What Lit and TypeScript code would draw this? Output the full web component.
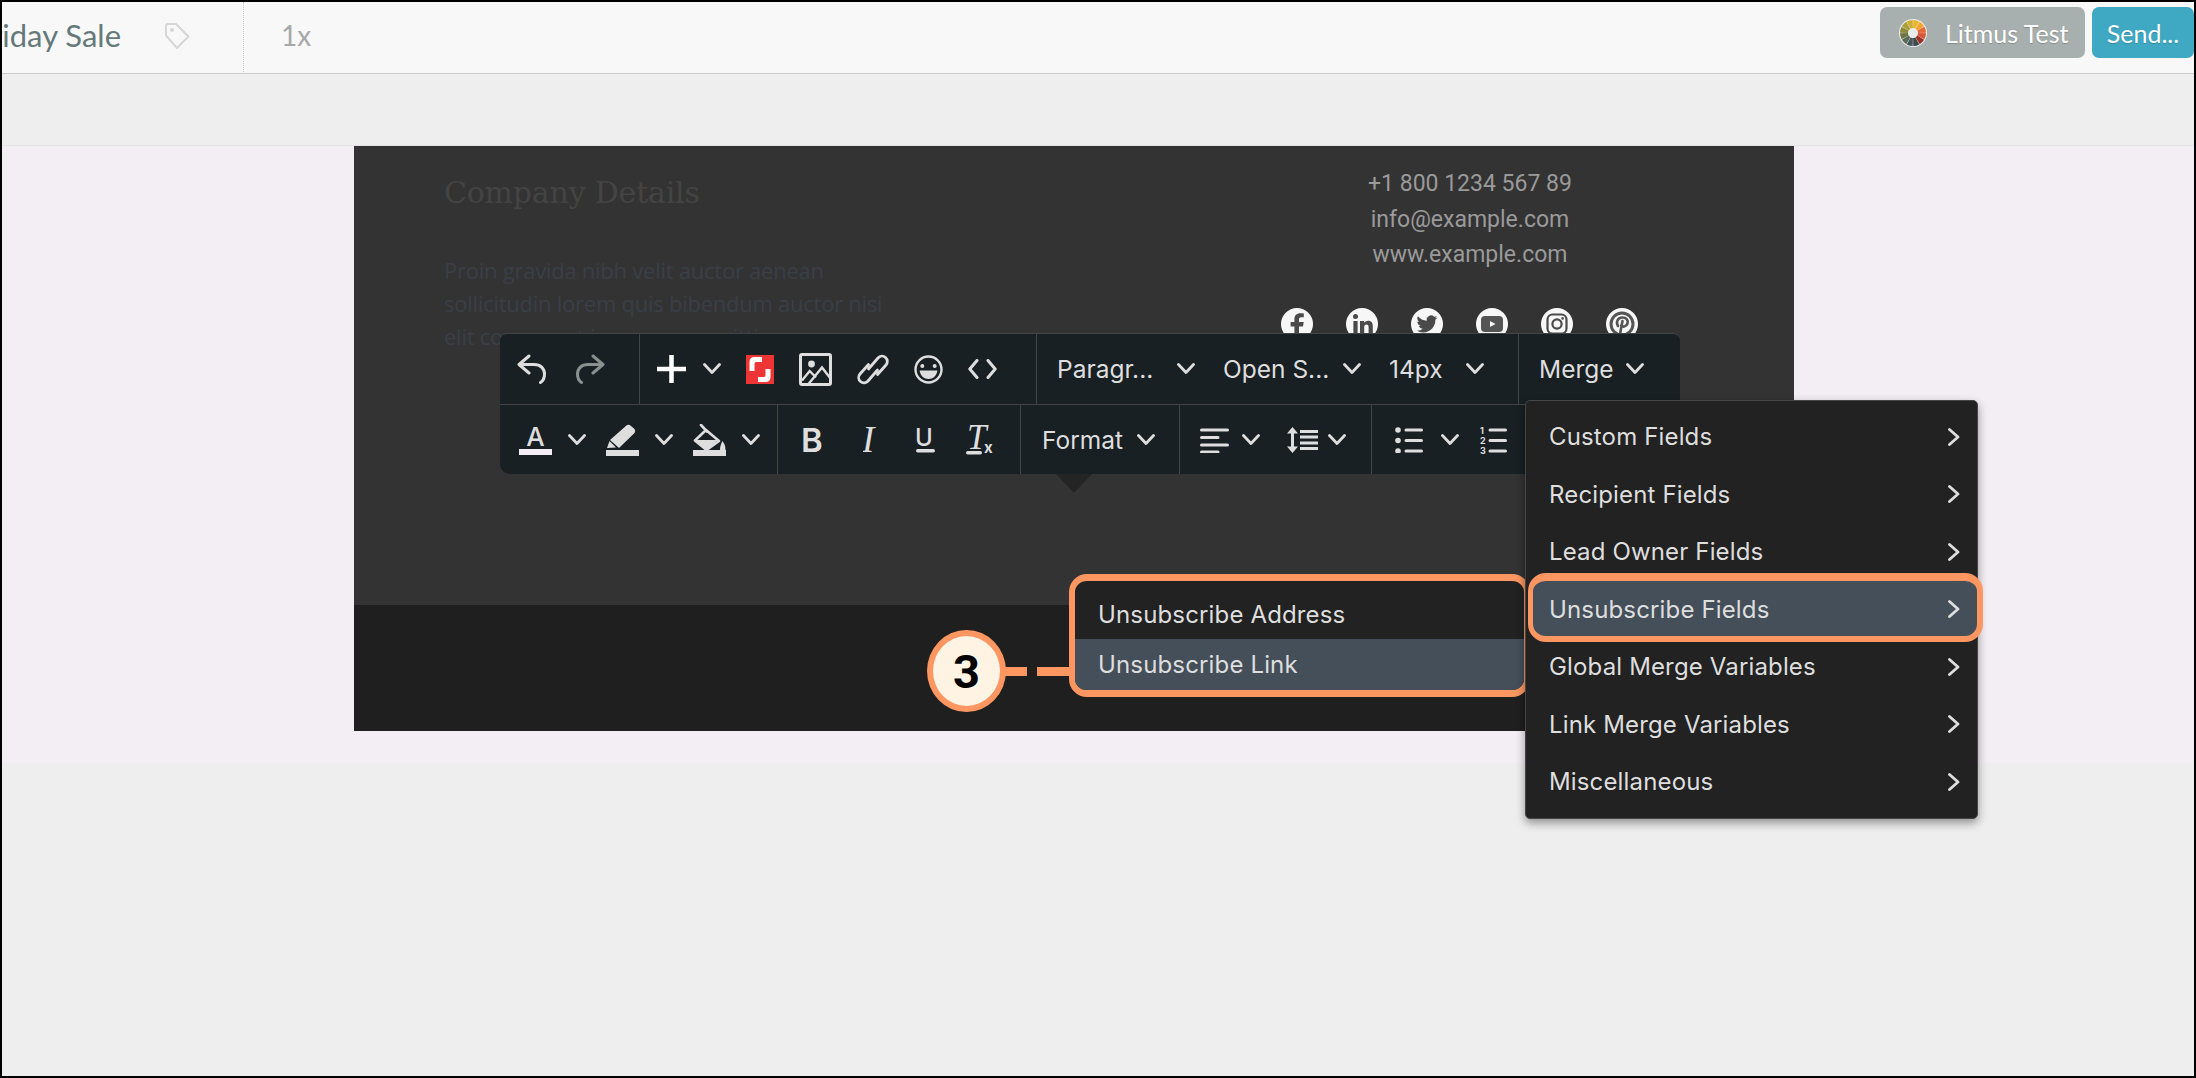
import { LitElement, html, css, svg } from "lit";
import { customElement } from "lit/decorators.js";

const MENU_ITEMS = [
  "Custom Fields",
  "Recipient Fields",
  "Lead Owner Fields",
  "Unsubscribe Fields",
  "Global Merge Variables",
  "Link Merge Variables",
  "Miscellaneous",
];

const WHEEL = [
  "#eab72f", "#f4a62e", "#e8683a", "#d9553a", "#9a3024", "#3d4853",
  "#46555a", "#5a6b58", "#6f7444", "#8f8a3a", "#ad9f38", "#cdae33",
];

// 12 slice colour wheel of the Litmus button
const wheel = () => {
  const slices = WHEEL.map((color, i) => {
    const a0 = ((i - 3) * Math.PI) / 6 + 0.02;
    const a1 = ((i - 2) * Math.PI) / 6 - 0.02;
    const p = (r: number, a: number) => `${(14 + r * Math.cos(a)).toFixed(2)} ${(14 + r * Math.sin(a)).toFixed(2)}`;
    return svg`<path d="M${p(5, a0)} L${p(13, a0)} A13 13 0 0 1 ${p(13, a1)} L${p(5, a1)} A5 5 0 0 0 ${p(5, a0)}Z" fill=${color}></path>`;
  });
  return html`<svg width="28" height="28" viewBox="0 0 28 28"><circle cx="14" cy="14" r="14" fill="#e8eceb"></circle>${slices}</svg>`;
};

const chev = html`<svg class="chev" width="18" height="12" viewBox="0 0 18 12"><path d="M1.5 1.5 L9 9.5 L16.5 1.5" fill="none" stroke="currentColor" stroke-width="2.8" stroke-linecap="round" stroke-linejoin="round"></path></svg>`;

const line = { fill: "none", stroke: "currentColor" };

const icons = {
  undo: html`<svg width="29" height="30" viewBox="0 0 29 30"><path d="M12 2 L2 10.5 L12 19 M3 10.5 H17 C24 10.5 27.5 15 27.5 20 C27.5 24 26 27 23.5 28.5" fill=${line.fill} stroke=${line.stroke} stroke-width="3" stroke-linecap="round" stroke-linejoin="round"></path></svg>`,
  redo: html`<svg class="dim" width="29" height="30" viewBox="0 0 29 30"><path d="M17 2 L27 10.5 L17 19 M26 10.5 H12 C5 10.5 1.5 15 1.5 20 C1.5 24 3 27 5.5 28.5" fill=${line.fill} stroke=${line.stroke} stroke-width="3" stroke-linecap="round" stroke-linejoin="round"></path></svg>`,
  plus: html`<svg class="white" width="29" height="28" viewBox="0 0 29 28"><path d="M0 14 H29 M14.5 0 V28" fill=${line.fill} stroke=${line.stroke} stroke-width="4.5"></path></svg>`,
  stock: html`<svg width="28" height="29" viewBox="0 0 28 29"><rect width="28" height="29" fill="#ee3535"></rect><path d="M16 2 V7 H10 Q8.5 7 8.5 9 V16 H3.5 V7 Q3.5 2 8.5 2 Z M12 27 V22 H18 Q19.5 22 19.5 20 V14 H24.5 V22 Q24.5 27 19.5 27 Z" fill="#fff"></path></svg>`,
  image: html`<svg width="33" height="33" viewBox="0 0 33 33"><rect x="1.5" y="1.5" width="30" height="30" rx="1.5" fill=${line.fill} stroke=${line.stroke} stroke-width="3"></rect><circle cx="12.5" cy="11" r="3.4" fill="currentColor"></circle><path d="M3 27.5 L10.7 18 L17 24.5 M9.5 31 L23 14.5 L31.5 25.5" fill=${line.fill} stroke=${line.stroke} stroke-width="2.4"></path></svg>`,
  link: html`<svg width="32" height="33" viewBox="0 0 32 33"><path d="M11.5 16 L21 5 A5.3 5.3 0 0 1 29 12 L20.5 21.5 M20.5 17 L11 28 A5.3 5.3 0 0 1 3 21 L11.5 11.5" fill=${line.fill} stroke=${line.stroke} stroke-width="2.8" stroke-linecap="round"></path></svg>`,
  smile: html`<svg width="29" height="29" viewBox="0 0 29 29"><circle cx="14.5" cy="14.5" r="13" fill=${line.fill} stroke=${line.stroke} stroke-width="2.4"></circle><circle cx="8.3" cy="11" r="2" fill="currentColor"></circle><circle cx="20.7" cy="11" r="2" fill="currentColor"></circle><path d="M5.6 15.5 H23.4 C22.8 20.5 19 24 14.5 24 C10 24 6.2 20.5 5.6 15.5Z" fill="currentColor"></path></svg>`,
  code: html`<svg width="29" height="20" viewBox="0 0 29 20"><path d="M9 1.5 L1.8 10 L9 18.5 M20 1.5 L27.2 10 L20 18.5" fill=${line.fill} stroke=${line.stroke} stroke-width="3" stroke-linecap="round" stroke-linejoin="round"></path></svg>`,
  color: html`<svg width="33" height="31" viewBox="0 0 33 31"><text x="16.5" y="22" text-anchor="middle" class="glyph" font-size="26" font-weight="500">A</text><rect y="25" width="33" height="6" fill="#f2eef4"></rect></svg>`,
  marker: html`<svg width="33" height="32" viewBox="0 0 33 32"><path d="M21 1 Q23 0 25 2 L28.5 5 Q30 7 28.5 9 L13 24 L4 16 Z M3.5 17 L10 23.5 L1 24 Z" fill="currentColor"></path><rect y="26" width="33" height="6" fill="currentColor"></rect></svg>`,
  fill: html`<svg width="33" height="32" viewBox="0 0 33 32"><path d="M8 1 L14 7.5 M13 6 L2 16.5 L13.5 26 L26 17 L13 6" fill=${line.fill} stroke=${line.stroke} stroke-width="2.6" stroke-linecap="round" stroke-linejoin="round"></path><path d="M2 16 H25 L13.5 26Z M29.5 17 C31 19.5 32.5 21 32.5 26 H27 C27 22 28 20 29.5 17Z" fill="currentColor"></path><rect y="26" width="33" height="6" fill="currentColor"></rect></svg>`,
  bold: html`<svg width="22" height="28" viewBox="0 0 22 28"><text x="-2" y="26" class="glyph" font-size="33" font-weight="600">B</text></svg>`,
  italic: html`<svg width="15" height="28" viewBox="0 0 15 28"><text x="-1" y="26" class="glyph serif" font-size="37" font-style="italic">I</text></svg>`,
  underline: html`<svg width="19" height="28" viewBox="0 0 19 28"><text x="-1" y="20" class="glyph" font-size="24" font-weight="500">U</text><rect y="23" width="19" height="3.5" rx="1.7" fill="currentColor"></rect></svg>`,
  clear: html`<svg width="28" height="30" viewBox="0 0 28 30"><text x="1" y="24" class="glyph serif" font-size="35" font-style="italic">T</text><text x="18" y="28" class="glyph" font-size="15" font-weight="700">x</text><rect y="26" width="16" height="3.5" rx="1.7" fill="currentColor"></rect></svg>`,
  align: html`<svg width="29" height="26" viewBox="0 0 29 26"><path d="M1.5 3 H27.5 M1.5 10.5 H18 M1.5 18 H27.5 M1.5 25 H18" fill=${line.fill} stroke=${line.stroke} stroke-width="3" stroke-linecap="round"></path></svg>`,
  lineheight: html`<svg width="31" height="26" viewBox="0 0 31 26"><path d="M5.5 3 V23" fill=${line.fill} stroke=${line.stroke} stroke-width="3"></path><path d="M5.5 0 L11 6.5 H0 Z M5.5 26 L11 19.5 H0 Z" fill="currentColor"></path><path d="M13 4.5 H31 M13 10 H31 M13 16 H31 M13 21.5 H31" fill=${line.fill} stroke=${line.stroke} stroke-width="3"></path></svg>`,
  bullets: html`<svg width="28" height="26" viewBox="0 0 28 26"><circle cx="3" cy="3" r="2.8" fill="currentColor"></circle><circle cx="3" cy="13.5" r="2.8" fill="currentColor"></circle><circle cx="3" cy="24" r="2.8" fill="currentColor"></circle><path d="M11 3 H26.5 M11 13.5 H26.5 M11 24 H26.5" fill=${line.fill} stroke=${line.stroke} stroke-width="3" stroke-linecap="round"></path></svg>`,
  numbers: html`<svg width="27" height="28" viewBox="0 0 27 28"><text x="0" y="8" class="glyph" font-size="9" font-weight="700">1</text><text x="0" y="18" class="glyph" font-size="9" font-weight="700">2</text><text x="0" y="28" class="glyph" font-size="9" font-weight="700">3</text><path d="M10 4 H25.5 M10 14.5 H25.5 M10 25 H25.5" fill=${line.fill} stroke=${line.stroke} stroke-width="3" stroke-linecap="round"></path></svg>`,
};

const social = [
  svg`<path d="M18 32 V18.5 H22 L22.7 14 H18 V11.5 C18 10 18.6 9.2 20.4 9.2 H22.8 V5.4 C22 5.3 20.7 5.2 19.4 5.2 C15.6 5.2 13.4 7.4 13.4 11 V14 H9.6 V18.5 H13.4 V32Z" fill="#4a4a4a"></path>`,
  svg`<circle cx="9.5" cy="8.5" r="2.5" fill="#4a4a4a"></circle><path d="M7.4 13 H11.6 V26 H7.4Z M14 13 H18 V15 C18.8 13.8 20.2 12.8 22.2 12.8 C25.6 12.8 26.8 15 26.8 18.4 V26 H22.6 V19.2 C22.6 17.4 22 16.4 20.5 16.4 C19 16.4 18.2 17.4 18.2 19.2 V26 H14Z" fill="#4a4a4a"></path>`,
  svg`<g transform="translate(5.5 5.5) scale(.875)"><path d="M23.953 4.57a10 10 0 01-2.825.775 4.958 4.958 0 002.163-2.723c-.951.555-2.005.959-3.127 1.184a4.92 4.92 0 00-8.384 4.482C7.69 8.095 4.067 6.13 1.64 3.162a4.822 4.822 0 00-.666 2.475c0 1.71.87 3.213 2.188 4.096a4.904 4.904 0 01-2.228-.616v.06a4.923 4.923 0 003.946 4.827 4.996 4.996 0 01-2.212.085 4.936 4.936 0 004.604 3.417 9.867 9.867 0 01-6.102 2.105c-.39 0-.779-.023-1.17-.067a13.995 13.995 0 007.557 2.209c9.053 0 13.998-7.496 13.998-13.985 0-.21 0-.42-.015-.63A9.935 9.935 0 0024 4.59z" fill="#4a4a4a"></path></g>`,
  svg`<rect x="5" y="8" width="22" height="16" rx="4" fill="#555"></rect><path d="M14 13 L19.5 16 L14 19Z" fill="#f7f7f7"></path>`,
  svg`<rect x="6.5" y="6.5" width="19" height="19" rx="5" fill="none" stroke="#4a4a4a" stroke-width="2.2"></rect><circle cx="16" cy="16" r="4.6" fill="none" stroke="#4a4a4a" stroke-width="2.2"></circle><circle cx="21.6" cy="10.4" r="1.3" fill="#4a4a4a"></circle>`,
  svg`<circle cx="16" cy="16" r="11" fill="none" stroke="#555" stroke-width="3"></circle><path d="M12 18 C9.5 13.5 12 9.5 16.5 9.5 C20.5 9.5 22.5 12.5 21.5 15.5 C20.5 18.5 17 19.5 15.2 17.5 M16.5 13 L14 26" fill="none" stroke="#555" stroke-width="2.6" stroke-linecap="round"></path>`,
];

@customElement("app-root")
export class AppRoot extends LitElement {
  static override styles = css`
    :host {
      display: block;
      position: relative;
      box-sizing: border-box;
      width: 2196px;
      height: 1078px;
      border: 2px solid #000;
      background: #eeeeee;
      overflow: hidden;
      font-family: "Inter", "Liberation Sans", sans-serif;
    }

    /* Top bar */
    .topbar {
      display: flex;
      align-items: flex-start;
      height: 72px;
      box-sizing: border-box;
      background: #f8f8f8;
      border-bottom: 1px solid #cccccc;
      font-family: "Lato", sans-serif;
    }
    .title {
      display: flex;
      justify-content: flex-end;
      width: 119px;
      height: 71px;
      line-height: 66px;
      overflow: hidden;
      white-space: nowrap;
      font-size: 31px;
      color: #66797a;
    }
    .title span {
      flex-shrink: 0;
    }
    .tag {
      margin: 21px 0 0 44px;
      color: #d6d6d6;
    }
    .zoomdiv {
      width: 0;
      height: 70px;
      margin-left: 53px;
      border-left: 1px dotted #c8c8c8;
    }
    .zoomval {
      margin-left: 37px;
      line-height: 66px;
      font-size: 28px;
      color: #a8a8a8;
    }
    .actions {
      display: flex;
      gap: 7px;
      margin-left: auto;
      padding-top: 5px;
    }
    .btn {
      display: flex;
      align-items: center;
      height: 51px;
      box-sizing: border-box;
      border-radius: 7px;
      font-size: 25px;
      color: #fff;
      text-shadow: 0 1px 1px rgba(0, 0, 0, 0.2);
    }
    .btn.litmus {
      width: 205px;
      padding-left: 19px;
      gap: 18px;
      background: #a7b0ae;
    }
    .btn.send {
      width: 102px;
      justify-content: center;
      background: #3fa9c4;
    }

    .subbar {
      height: 72px;
      box-sizing: border-box;
      background: #eeeeee;
      border-bottom: 1px solid #e3e3e3;
    }

    /* Email canvas */
    .canvas {
      height: 617px;
      background: #f2eef4;
      padding-left: 352px;
    }
    .email {
      width: 1440px;
    }
    .email-body {
      display: flex;
      height: 459px;
      box-sizing: border-box;
      background: #333333;
    }
    .email-foot {
      height: 126px;
      background: #1f1f1f;
    }
    .details {
      width: 916px;
      flex-shrink: 0;
      padding: 30px 0 0 90px;
      box-sizing: border-box;
    }
    .details h2 {
      margin: 0;
      font: 400 30px/34px "DejaVu Serif", serif;
      letter-spacing: -0.2px;
      color: #444444;
    }
    .details p {
      width: 460px;
      margin: 44px 0 0;
      font: 400 22px/33px "Open Sans", sans-serif;
      letter-spacing: -0.25px;
      color: #3a3f47;
    }
    .contact {
      width: 400px;
      padding-top: 20px;
      font: 400 23px/35.5px "Roboto", sans-serif;
      color: #9a9a9a;
      text-align: center;
    }
    .socials {
      display: flex;
      gap: 33px;
      margin: 35px 0 0 11px;
    }
    .socials svg {
      display: block;
    }

    /* Editor toolbar */
    .toolbar {
      position: absolute;
      left: 498px;
      top: 331px;
      display: flex;
      flex-direction: column;
      align-items: flex-start;
      color: #dedede;
    }
    .row {
      display: flex;
      background: #182024;
      border-top: 1px solid #444444;
      box-sizing: border-box;
    }
    .row.one {
      width: 1180px;
      height: 71px;
      border-radius: 7px 7px 0 0;
    }
    .row.two {
      width: 1040px;
      height: 70px;
      border-radius: 0 0 0 10px;
    }
    .group {
      display: flex;
      align-items: center;
      box-sizing: border-box;
      border-right: 1px solid #444444;
      flex-shrink: 0;
    }
    .group:last-child {
      border-right: none;
    }
    .group svg {
      display: block;
      flex-shrink: 0;
    }
    .glyph {
      font-family: "Inter", sans-serif;
      fill: currentColor;
    }
    .glyph.serif {
      font-family: "Liberation Serif", serif;
    }
    .dim {
      color: #8a8f90;
    }
    .white {
      color: #fff;
    }
    .sel {
      font-size: 24.5px;
      white-space: nowrap;
    }
    .w120 {
      width: 120px;
    }
    .w77 {
      width: 77px;
    }

    .undo {
      width: 140px;
      padding-left: 17px;
      gap: 30px;
    }
    .insert {
      width: 397px;
      padding-left: 17px;
      gap: 25px;
    }
    .insert .chev {
      margin-left: -8px;
    }
    .blocks {
      width: 482px;
      padding-left: 20px;
      gap: 28px;
    }
    .blocks span.pair {
      display: flex;
      align-items: center;
    }
    .merge {
      width: 161px;
      padding-left: 20px;
      gap: 12px;
    }
    .colors {
      width: 278px;
      padding-left: 19px;
      gap: 20px;
    }
    .colors .chev {
      margin-left: -4px;
    }
    .marks {
      width: 243px;
      padding-left: 25px;
      gap: 38px;
    }
    .marks .tx {
      margin-left: -7px;
    }
    .format {
      width: 159px;
      padding-left: 21px;
      gap: 14px;
    }
    .paras {
      width: 192px;
      padding-left: 20px;
      gap: 13px;
    }
    .paras .lh {
      margin-left: 14px;
    }
    .paras .lh + .chev {
      margin-left: -3px;
    }
    .lists {
      padding-left: 23px;
      gap: 18px;
    }
    .lists .ol {
      margin-left: 3px;
    }
    .caret {
      position: absolute;
      left: 1054px;
      top: 472px;
      width: 0;
      height: 0;
      border-left: 18px solid transparent;
      border-right: 18px solid transparent;
      border-top: 19px solid #242424;
    }

    /* Merge menu */
    .menu {
      position: absolute;
      left: 1523px;
      top: 398px;
      width: 453px;
      padding: 7px 0 7px;
      box-sizing: border-box;
      background: #222222;
      border: 1px solid #454545;
      border-radius: 5px;
      box-shadow: 0 4px 10px rgba(0, 0, 0, 0.4);
      color: #dedede;
      font-size: 24px;
      letter-spacing: 0.15px;
    }
    .item {
      position: relative;
      display: flex;
      align-items: center;
      justify-content: space-between;
      height: 57.5px;
      padding: 0 17px 0 23px;
    }
    .item span,
    .item svg {
      position: relative;
      z-index: 1;
    }
    .item.on::after {
      content: "";
      position: absolute;
      left: 2px;
      right: -6px;
      top: -8px;
      bottom: -4px;
      border-style: solid;
      border-color: #fd9660;
      border-width: 8px 6px 6px 5px;
      border-radius: 18px;
      background: #444f5a;
    }

    .submenu {
      position: absolute;
      left: 1067px;
      top: 572px;
      width: 461px;
      height: 123px;
      box-sizing: border-box;
      border-style: solid;
      border-color: #fd9660;
      border-width: 7px 6px;
      border-radius: 18px;
      background: #222222;
      overflow: hidden;
      color: #dedede;
      font-size: 24px;
      letter-spacing: 0.15px;
    }
    .sub {
      display: flex;
      align-items: center;
      padding-left: 23px;
    }
    .sub.a {
      height: 58px;
      padding-top: 9px;
      box-sizing: border-box;
    }
    .sub.b {
      height: 51px;
      background: #444f5a;
    }

    /* Step callout */
    .step {
      position: absolute;
      left: 925px;
      top: 628px;
      display: flex;
      align-items: center;
      justify-content: center;
      width: 79px;
      height: 82px;
      box-sizing: border-box;
      border: 6px solid #fd9660;
      border-radius: 50%;
      background: #fff3e3;
      font: 700 47px "Roboto", sans-serif;
      color: #000;
    }
    .dash {
      position: absolute;
      top: 665px;
      height: 9px;
      background: #fd9660;
    }
    .dash.d1 {
      left: 1003px;
      width: 22px;
    }
    .dash.d2 {
      left: 1035px;
      width: 32px;
    }
  `;

  override render() {
    return html`
      <div class="topbar">
        <div class="title"><span>Black Friday Sale</span></div>
        <svg class="tag" width="25" height="26" viewBox="0 0 25 26">
          <path d="M1 2.5 Q1 1 2.5 1 L11 1 L23.5 13.5 L12 25 L1 12.5 Z" fill="none" stroke="currentColor" stroke-width="2" stroke-linejoin="round"></path>
          <circle cx="7" cy="7" r="2" fill="currentColor"></circle>
        </svg>
        <div class="zoomdiv"></div>
        <div class="zoomval">1x</div>
        <div class="actions">
          <div class="btn litmus">${wheel()}<span>Litmus Test</span></div>
          <div class="btn send">Send...</div>
        </div>
      </div>
      <div class="subbar"></div>
      <div class="canvas">
        <div class="email">
          <div class="email-body">
            <div class="details">
              <h2>Company Details</h2>
              <p>Proin gravida nibh velit auctor aenean sollicitudin lorem quis bibendum auctor nisi elit consequat ipsum nec sagittis</p>
            </div>
            <div class="contact">
              <div>+1 800 1234 567 89</div>
              <div>info@example.com</div>
              <div>www.example.com</div>
              <div class="socials">
                ${social.map(
                  (g) => html`<svg width="32" height="32" viewBox="0 0 32 32"><circle cx="16" cy="16" r="16" fill="#f7f7f7"></circle>${g}</svg>`
                )}
              </div>
            </div>
          </div>
          <div class="email-foot"></div>
        </div>
      </div>

      <div class="toolbar">
        <div class="row one">
          <div class="group undo">${icons.undo}${icons.redo}</div>
          <div class="group insert">${icons.plus}${chev}${icons.stock}${icons.image}${icons.link}${icons.smile}${icons.code}</div>
          <div class="group blocks">
            <span class="pair"><span class="sel w120">Paragr...</span>${chev}</span>
            <span class="pair"><span class="sel w120">Open S...</span>${chev}</span>
            <span class="pair"><span class="sel w77">14px</span>${chev}</span>
          </div>
          <div class="group merge"><span class="sel">Merge</span>${chev}</div>
        </div>
        <div class="row two">
          <div class="group colors">${icons.color}${chev}${icons.marker}${chev}${icons.fill}${chev}</div>
          <div class="group marks">${icons.bold}${icons.italic}${icons.underline}<span class="tx">${icons.clear}</span></div>
          <div class="group format"><span class="sel">Format</span>${chev}</div>
          <div class="group paras">${icons.align}${chev}<span class="lh">${icons.lineheight}</span>${chev}</div>
          <div class="group lists">${icons.bullets}${chev}<span class="ol">${icons.numbers}</span></div>
        </div>
      </div>
      <div class="caret"></div>

      <div class="submenu">
        <div class="sub a">Unsubscribe Address</div>
        <div class="sub b">Unsubscribe Link</div>
      </div>

      <div class="menu">
        ${MENU_ITEMS.map(
          (label) => html`
            <div class="item ${label === "Unsubscribe Fields" ? "on" : ""}">
              <span>${label}</span>
              <svg width="12" height="18" viewBox="0 0 12 18"><path d="M1.5 1.5 L10 9 L1.5 16.5" fill="none" stroke="currentColor" stroke-width="2.8" stroke-linecap="round" stroke-linejoin="round"></path></svg>
            </div>
          `
        )}
      </div>

      <div class="dash d1"></div>
      <div class="dash d2"></div>
      <div class="step">3</div>
    `;
  }
}
